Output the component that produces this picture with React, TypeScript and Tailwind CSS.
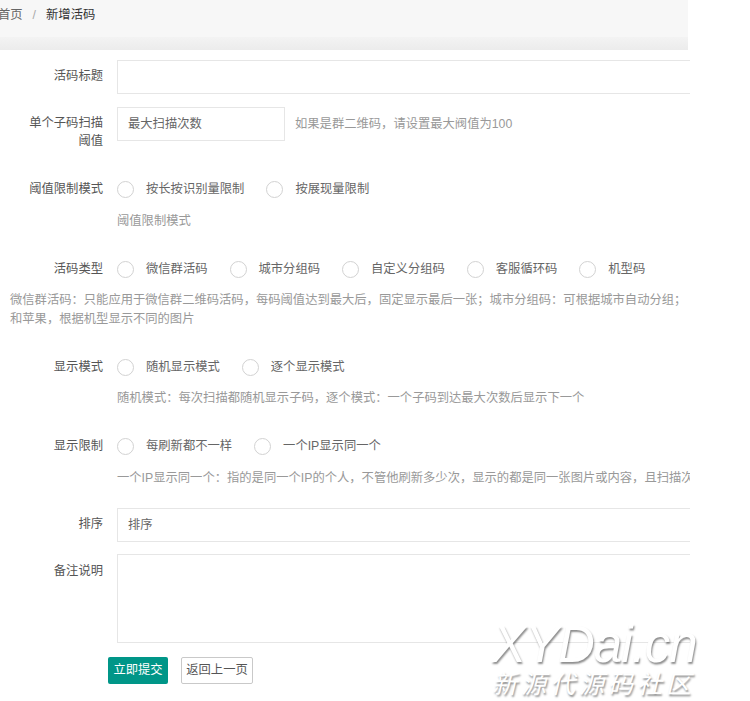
import React from 'react';

const font = { fontFamily: '"Liberation Sans", "Noto Sans CJK SC", sans-serif' };

function Radio({ label }: { label: string }) {
  return (
    <div className="flex items-center mr-[22px] shrink-0">
      <span className="w-[17px] h-[17px] rounded-full border border-[#d2d2d2] bg-white" />
      <span className="ml-[12px] text-[#666] whitespace-nowrap">{label}</span>
    </div>
  );
}

function Label({ children }: { children: React.ReactNode }) {
  return (
    <div className="w-[80px] ml-[23px] mr-[14px] shrink-0 text-right text-[#555] leading-[18px]">
      {children}
    </div>
  );
}

function RadioRow({ label, options }: { label: string; options: string[] }) {
  return (
    <div className="flex items-center h-[34px]">
      <Label>{label}</Label>
      {options.map((o) => (
        <Radio key={o} label={o} />
      ))}
    </div>
  );
}

function Hint({ children, className = '' }: { children: React.ReactNode; className?: string }) {
  return (
    <div className={`ml-[117px] text-[#999] leading-[18px] whitespace-nowrap ${className}`}>{children}</div>
  );
}

export default function App() {
  return (
    <div className="relative w-[750px] h-[701px] overflow-hidden bg-white text-[12.3px]" style={font}>
      {/* breadcrumb */}
      <div className="w-[688px]">
        <div className="h-[37px] bg-[#f7f7f7] flex items-start pt-[6px] leading-[18px] -ml-[2px] text-[12.3px]">
          <span className="text-[#666]">首页</span>
          <span className="text-[#aaa] mx-[10px]">/</span>
          <span className="text-[#333]">新增活码</span>
        </div>
        <div className="h-[13px] bg-gradient-to-b from-[#f3f3f3] to-[#ececec]" />
      </div>

      <div className="w-[690px] overflow-hidden">
        {/* title */}
        <div className="flex mt-[10px]">
          <div className="pt-[7px]">
            <Label>活码标题</Label>
          </div>
          <div className="h-[34px] w-[620px] shrink-0 border border-[#e6e6e6] bg-white" />
        </div>

        {/* threshold */}
        <div className="flex mt-[13px] items-start">
          <div className="pt-[7px]">
            <Label>单个子码扫描阈值</Label>
          </div>
          <div className="h-[34px] w-[168px] shrink-0 border border-[#e6e6e6] flex items-center pl-[10px] text-[#666]">
            最大扫描次数
          </div>
          <div className="h-[34px] flex items-center ml-[10px] text-[#999] whitespace-nowrap">
            如果是群二维码，请设置最大阀值为100
          </div>
        </div>

        <div className="mt-[22px]">
          <RadioRow label="阈值限制模式" options={['按长按识别量限制', '按展现量限制']} />
        </div>
        <Hint className="mt-[6px]">阈值限制模式</Hint>

        <div className="mt-[22px]">
          <RadioRow label="活码类型" options={['微信群活码', '城市分组码', '自定义分组码', '客服循环码', '机型码']} />
        </div>
        <div className="mt-[5px] ml-[10px] text-[#999] leading-[19px]">
          <div className="whitespace-nowrap">
            微信群活码：只能应用于微信群二维码活码，每码阈值达到最大后，固定显示最后一张；城市分组码：可根据城市自动分组；
          </div>
          <div className="whitespace-nowrap">和苹果，根据机型显示不同的图片</div>
        </div>

        <div className="mt-[21px]">
          <RadioRow label="显示模式" options={['随机显示模式', '逐个显示模式']} />
        </div>
        <Hint className="mt-[5px]">随机模式：每次扫描都随机显示子码，逐个模式：一个子码到达最大次数后显示下一个</Hint>

        <div className="mt-[22px]">
          <RadioRow label="显示限制" options={['每刷新都不一样', '一个IP显示同一个']} />
        </div>
        <Hint className="mt-[6px]">
          一个IP显示同一个：指的是同一个IP的个人，不管他刷新多少次，显示的都是同一张图片或内容，且扫描次数不变
        </Hint>

        {/* sort */}
        <div className="flex mt-[21px]">
          <div className="pt-[7px]">
            <Label>排序</Label>
          </div>
          <div className="h-[34px] w-[620px] shrink-0 border border-[#e6e6e6] flex items-center pl-[10px] text-[#666]">
            排序
          </div>
        </div>

        {/* remark */}
        <div className="flex mt-[12px]">
          <div className="pt-[8px]">
            <Label>备注说明</Label>
          </div>
          <div className="h-[89px] w-[620px] shrink-0 border border-[#e6e6e6]" />
        </div>

        {/* buttons */}
        <div className="flex mt-[14px] ml-[108px] gap-[13px]">
          <button className="h-[27px] w-[60px] bg-[#009688] text-white rounded-[2px] text-[12.3px]">立即提交</button>
          <button className="h-[27px] w-[72px] bg-white border border-[#c9c9c9] text-[#555] rounded-[2px] text-[12.3px]">
            返回上一页
          </button>
        </div>
      </div>

      {/* watermark */}
      <div className="absolute left-[492px] top-[621px] pointer-events-none select-none">
        <div
          className="italic text-white text-[51px] leading-[48px] tracking-[-1px] [text-shadow:1px_2px_2px_rgba(0,0,0,0.45)]"
          style={{ fontFamily: '"Liberation Sans", sans-serif' }}
        >
          XYDai.cn
        </div>
        <div
          className="italic text-white text-[25px] leading-[26px] tracking-[4px] [text-shadow:1px_2px_2px_rgba(0,0,0,0.45)]"
          style={{ fontFamily: '"Noto Sans CJK SC", sans-serif' }}
        >
          新源代源码社区
        </div>
      </div>
    </div>
  );
}
